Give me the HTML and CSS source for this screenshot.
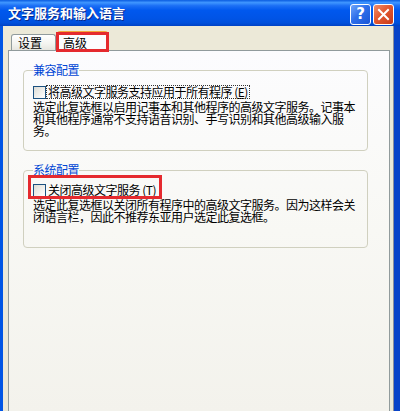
FILE: index.html
```html
<!DOCTYPE html>
<html lang="zh-CN">
<head>
<meta charset="utf-8">
<title>文字服务和输入语言</title>
<link rel="stylesheet" href="styles.css">
</head>
<body>
<div class="window">
  <div class="titlebar">
    <span class="title">文字服务和输入语言</span>
    <div class="caption-buttons">
      <span class="cbtn help">?</span>
      <span class="cbtn close">
        <svg width="13" height="13" viewBox="0 0 13 13"><path d="M2 2 L11 11 M11 2 L2 11" stroke="#fff" stroke-width="2" stroke-linecap="square"/></svg>
      </span>
    </div>
  </div>
  <div class="frame">
    <div class="tabs">
      <span class="tab">设置</span>
      <span class="tab active">高级<span class="mark mark-tab"></span></span>
    </div>
    <div class="panel">
      <fieldset class="group group-compat">
        <legend>兼容配置</legend>
        <div class="check-row">
          <span class="checkbox"></span>
          <span class="label focus">将高级文字服务支持应用于所有程序 (<u>E</u>)</span>
        </div>
        <p class="desc">选定此复选框以启用记事本和其他程序的高级文字服务。记事本和其他程序通常不支持语音识别、手写识别和其他高级输入服务。</p>
      </fieldset>
      <fieldset class="group group-system">
        <legend>系统配置</legend>
        <div class="check-row marked">
          <span class="checkbox"></span>
          <span class="label">关闭高级文字服务 (<u>T</u>)</span>
        </div>
        <p class="desc">选定此复选框以关闭所有程序中的高级文字服务。因为这样会关闭语言栏，因此不推荐东亚用户选定此复选框。</p>
      </fieldset>
    </div>
  </div>
</div>
</body>
</html>
```

FILE: styles.css
```css
html, body {
  margin: 0;
  padding: 0;
}

body {
  width: 400px;
  height: 411px;
  overflow: hidden;
  font-family: "Noto Sans CJK SC", "Liberation Sans", sans-serif;
  font-size: 12px;
  letter-spacing: -0.5px;
  color: #000;
}

.window {
  width: 400px;
  height: 411px;
  display: flex;
  flex-direction: column;
}

/* Luna caption bar */
.titlebar {
  height: 26px;
  flex: none;
  display: flex;
  align-items: center;
  justify-content: space-between;
  padding: 0 6px 0 8px;
  background: linear-gradient(to bottom,
    #0A5CE0 0%, #3F96FF 10%, #1C6FF5 22%, #0058EE 40%,
    #0054E6 70%, #0050DC 88%, #0042C4 100%);
}

.title {
  color: #fff;
  font-weight: bold;
  font-size: 13px;
  line-height: 14px;
  letter-spacing: 0;
  text-shadow: 1px 1px 0 #0A2A8A;
}

.caption-buttons {
  display: flex;
  gap: 2px;
  margin-top: 2px;
}

.cbtn {
  width: 19px;
  height: 19px;
  border: 1px solid #fff;
  border-radius: 3px;
  display: flex;
  align-items: center;
  justify-content: center;
  color: #fff;
  font-family: "DejaVu Sans", sans-serif;
  font-weight: bold;
  font-size: 15px;
  letter-spacing: 0;
  line-height: 1;
}

.help {
  background: linear-gradient(135deg, #6FA6FA 0%, #2E6FEA 45%, #1A55D6 100%);
}

.close {
  background: linear-gradient(135deg, #F08E6C 0%, #E2582F 45%, #C7391A 100%);
}

/* window body below the caption */
.frame {
  flex: 1;
  display: flex;
  flex-direction: column;
  background: #ECE9D8;
  border-left: 3px solid #0055E5;
  border-right: 6px solid #0843C8;
  padding: 5px 4px 0 5px;
  box-shadow: inset -1px 0 0 #8A8E9C;
}

.tabs {
  display: flex;
  align-items: flex-end;
  padding-left: 3px;
  position: relative;
  z-index: 1;
}

.tab {
  box-sizing: border-box;
  height: 16px;
  width: 45px;
  border: 1px solid #919B9C;
  border-bottom: none;
  border-radius: 3px 3px 0 0;
  background: linear-gradient(#FFFFFF, #F3F3EF 60%, #E6E5DE);
  line-height: 15px;
  padding-left: 6px;
  letter-spacing: 0;
}

.tab.active {
  position: relative;
  width: 51px;
  height: 20px;
  margin-left: 1px;
  margin-bottom: -1px;
  background: #FCFCFE;
  line-height: 20px;
  padding-left: 5px;
  border-top: 2px solid #F3A63A;
}

/* red annotation frames */
.mark {
  position: absolute;
  border: 3px solid #E52A2E;
  pointer-events: none;
}

.mark-tab {
  left: -2px;
  top: -1px;
  width: 47px;
  height: 14px;
}

.panel {
  flex: 1;
  border: 1px solid #919B9C;
  border-bottom: none;
  background: linear-gradient(#FCFCFE, #F8F8F4 50%, #F3F2EC);
  padding-top: 13px;
}

.group {
  margin: 0 23px 0 14px;
  padding: 0 9px 13px 9px;
  border: 1px solid #D0D0BF;
  border-radius: 4px;
}

.group legend {
  color: #0046D5;
  padding: 0;
  line-height: 12px;
}

.group-system {
  margin-top: 13px;
  padding-bottom: 24px;
}

.check-row {
  display: flex;
  align-items: center;
  height: 14px;
  margin-top: 9px;
}

.group-system .check-row {
  margin-top: 7px;
  position: relative;
}

.check-row.marked::after {
  content: "";
  position: absolute;
  left: -5px;
  top: -8px;
  width: 128px;
  height: 18px;
  border: 3px solid #E52A2E;
}

.checkbox {
  box-sizing: border-box;
  width: 13px;
  height: 13px;
  flex: none;
  border: 1px solid #1C5180;
  background: linear-gradient(135deg, #DCDBD5 0%, #EFEEEA 50%, #FFFFFF 100%);
}

.label {
  margin-left: 1px;
  padding: 0 1px;
  line-height: 12px;
  white-space: nowrap;
}

.label.focus {
  outline: 1px dotted #333;
  outline-offset: 0;
}

.desc {
  margin: 2px 0 0 0;
  line-height: 12px;
  width: 325px;
}
```
